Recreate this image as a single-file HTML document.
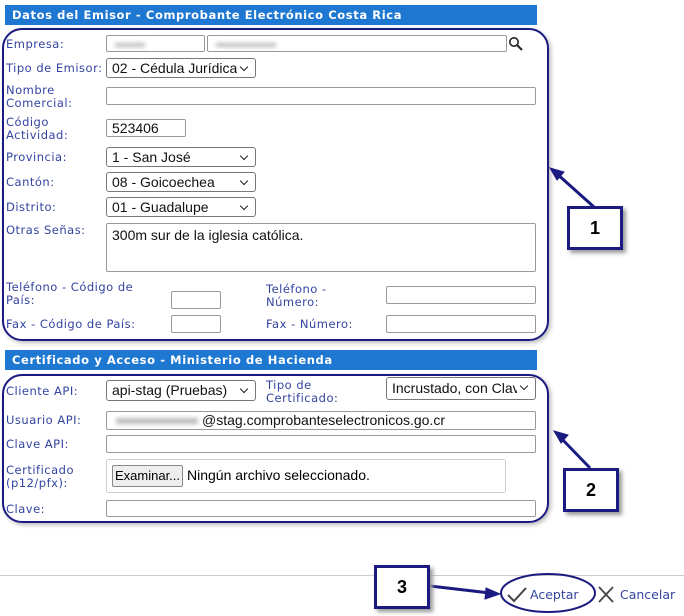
<!DOCTYPE html>
<html><head><meta charset="utf-8"><style>
body{margin:0;width:684px;height:616px;background:#fff;position:relative;overflow:hidden;font-family:"DejaVu Sans",Verdana,sans-serif}
.a{position:absolute}
.hd{position:absolute;left:5px;width:532px;height:20px;background:#1e78d2;color:#fff;font-weight:bold;font-size:11.5px;letter-spacing:0.6px;line-height:20px;padding-left:7px;box-sizing:border-box}
.panel{position:absolute;left:2px;width:547px;border:2px solid #1a1a80;border-radius:20px;box-sizing:border-box;box-shadow:2px 2px 4px #bbb}
.l{position:absolute;left:6px;font-size:11.5px;letter-spacing:0.5px;color:#3344a0;line-height:13px}
.i{position:absolute;border:1px solid #999;border-radius:2px;box-sizing:border-box;background:#fff;font-family:"Liberation Sans",Arial,sans-serif;font-size:14px;padding-left:5px;color:#111;white-space:nowrap;overflow:hidden}
.s{position:absolute;border:1px solid #777;border-radius:3px;box-sizing:border-box;background:#fff;font-family:"Liberation Sans",Arial,sans-serif;font-size:14px;padding-left:5px;color:#111;white-space:nowrap;overflow:hidden}
.s .t{display:block;overflow:hidden;margin-right:18px}
.s:after{content:"";position:absolute;right:8px;top:5px;width:5px;height:5px;border-right:1.3px solid #222;border-bottom:1.3px solid #222;transform:rotate(45deg)}
.blur{position:absolute;top:7px;height:4px;background:#bbb;filter:blur(2px)}
.cb{position:absolute;width:56px;height:44px;border:3px solid #1a1a80;box-sizing:border-box;background:#fff;font:bold 18px "Liberation Sans",Arial,sans-serif;text-align:center;line-height:38px;box-shadow:3px 3px 4px #999}
</style></head><body>
<div class="hd" style="top:5px">Datos del Emisor - Comprobante Electrónico Costa Rica</div>
<div class="panel" style="top:28px;height:313px"></div>
<div class="l" style="top:38px">Empresa:</div>
<div class="i" style="left:106px;top:35px;width:99px;height:17px"><div class="blur" style="left:8px;width:30px"></div></div>
<div class="i" style="left:207px;top:35px;width:300px;height:17px"><div class="blur" style="left:8px;width:60px"></div></div>
<svg class="a" style="left:508px;top:36px" width="16" height="16"><circle cx="6" cy="6" r="4.2" fill="none" stroke="#222" stroke-width="1.6"/><line x1="9" y1="9" x2="14" y2="14" stroke="#222" stroke-width="2"/></svg>
<div class="l" style="top:62px">Tipo de Emisor:</div>
<div class="s" style="left:106px;top:58px;width:150px;height:20px;line-height:18px"><span class="t">02 - Cédula Jurídica</span></div>
<div class="l" style="top:84px">Nombre<br>Comercial:</div>
<div class="i" style="left:106px;top:87px;width:430px;height:18px"></div>
<div class="l" style="top:116px">Código<br>Actividad:</div>
<div class="i" style="left:106px;top:119px;width:80px;height:18px;line-height:16px">523406</div>
<div class="l" style="top:151px">Provincia:</div>
<div class="s" style="left:106px;top:147px;width:150px;height:20px;line-height:18px">1 - San José</div>
<div class="l" style="top:176px">Cantón:</div>
<div class="s" style="left:106px;top:172px;width:150px;height:20px;line-height:18px">08 - Goicoechea</div>
<div class="l" style="top:201px">Distrito:</div>
<div class="s" style="left:106px;top:197px;width:150px;height:20px;line-height:18px">01 - Guadalupe</div>
<div class="l" style="top:224px">Otras Señas:</div>
<div class="i" style="left:106px;top:223px;width:430px;height:49px;line-height:18px;padding-top:2px">300m sur de la iglesia católica.</div>
<div class="l" style="top:281px">Teléfono - Código de<br>País:</div>
<div class="i" style="left:171px;top:291px;width:50px;height:18px"></div>
<div class="l" style="left:266px;top:283px">Teléfono -<br>Número:</div>
<div class="i" style="left:386px;top:286px;width:150px;height:18px"></div>
<div class="l" style="top:318px">Fax - Código de País:</div>
<div class="i" style="left:171px;top:315px;width:50px;height:18px"></div>
<div class="l" style="left:266px;top:318px">Fax - Número:</div>
<div class="i" style="left:386px;top:315px;width:150px;height:18px"></div>

<div class="hd" style="top:350px">Certificado y Acceso - Ministerio de Hacienda</div>
<div class="panel" style="top:374px;height:149px"></div>
<div class="l" style="top:385px">Cliente API:</div>
<div class="s" style="left:106px;top:380px;width:150px;height:21px;line-height:19px">api-stag (Pruebas)</div>
<div class="l" style="left:266px;top:379px">Tipo de<br>Certificado:</div>
<div class="s" style="left:386px;top:377px;width:150px;height:23px;line-height:21px"><span class="t">Incrustado, con Clave</span></div>
<div class="l" style="top:414px">Usuario API:</div>
<div class="i" style="left:106px;top:411px;width:430px;height:19px;line-height:17px"><span style="display:inline-block;width:82px;height:6px;background:#bbb;filter:blur(2px);vertical-align:middle;margin-left:4px"></span><span style="margin-left:4px">@stag.comprobanteselectronicos.go.cr</span></div>
<div class="l" style="top:438px">Clave API:</div>
<div class="i" style="left:106px;top:435px;width:430px;height:18px"></div>
<div class="l" style="top:464px">Certificado<br>(p12/pfx):</div>
<div class="a" style="left:106px;top:459px;width:400px;height:34px;border:1px solid #ccc;border-radius:3px;box-sizing:border-box"></div>
<div class="a" style="left:112px;top:465px;width:71px;height:22px;border:1px solid #888;border-radius:2px;background:#eee;box-sizing:border-box;font:13px 'Liberation Sans',Arial,sans-serif;line-height:20px;text-align:center">Examinar...</div>
<div class="a" style="left:187px;top:467px;font:14px 'Liberation Sans',Arial,sans-serif">Ningún archivo seleccionado.</div>
<div class="l" style="top:503px">Clave:</div>
<div class="i" style="left:106px;top:500px;width:430px;height:17px"></div>

<div class="a" style="left:0;top:575px;width:684px;height:1px;background:#ccc"></div>

<svg class="a" style="left:0;top:0" width="684" height="616">
<g stroke="#1a1a80" stroke-width="3" fill="#1a1a80">
<line x1="594" y1="207" x2="556" y2="173"/><polygon points="550,168 564,172 557,180" stroke-width="1"/>
<line x1="590" y1="468" x2="560" y2="437"/><polygon points="554,431 568,435 561,443" stroke-width="1"/>
<line x1="430" y1="586" x2="490" y2="593"/><polygon points="500,594 486,588 485,599" stroke-width="1"/>
</g>
<ellipse cx="548" cy="593" rx="47" ry="19" fill="none" stroke="#1a1a80" stroke-width="2"/>
<polyline points="508,595 514,601 526,588" fill="none" stroke="#444" stroke-width="2"/>
<g stroke="#444" stroke-width="1.8"><line x1="599" y1="587" x2="613" y2="602"/><line x1="613" y1="587" x2="599" y2="602"/></g>
</svg>
<div class="cb" style="left:567px;top:206px">1</div>
<div class="cb" style="left:563px;top:468px">2</div>
<div class="cb" style="left:374px;top:565px">3</div>
<div class="a" style="left:530px;top:587px;font-size:12.5px;color:#3344a0">Aceptar</div>
<div class="a" style="left:620px;top:587px;font-size:12.5px;color:#3344a0">Cancelar</div>
</body></html>
